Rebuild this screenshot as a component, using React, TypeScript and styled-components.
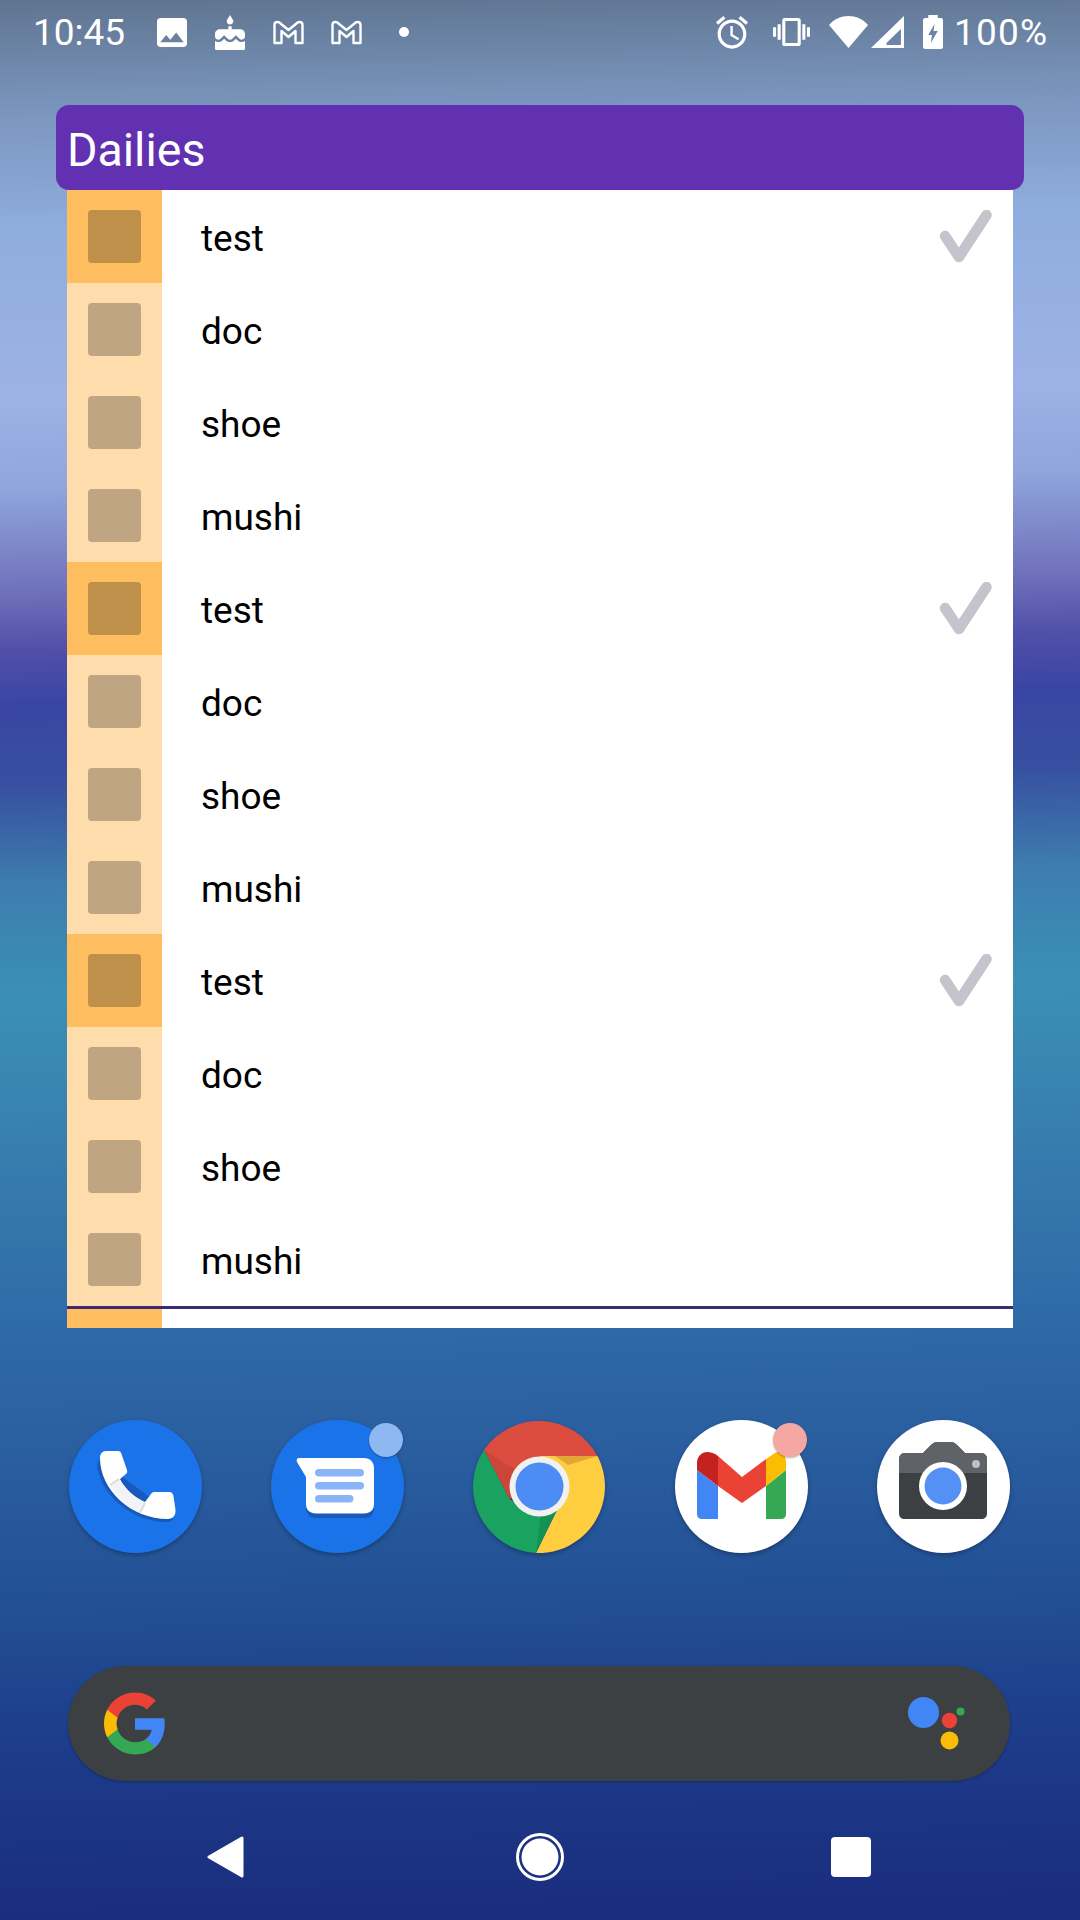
import React from "react";
import styled, { createGlobalStyle } from "styled-components";

const Global = createGlobalStyle`
  html, body { margin: 0; padding: 0; background: #1a2d7e; }
  #root { width: 1080px; height: 1920px; }
`;

const Screen = styled.div`
  width: 1080px;
  height: 1920px;
  overflow: hidden;
  display: flex;
  flex-direction: column;
  font-family: Roboto, "Liberation Sans", sans-serif;
  background: linear-gradient(
    179deg,
    #5f7490 0,
    #7a95bd 110px,
    #8fadde 230px,
    #9db2e6 400px,
    #8fa5dc 490px,
    #7072bb 590px,
    #5050a8 650px,
    #3a45a3 705px,
    #3750a0 785px,
    #3d7dae 885px,
    #3a90b6 1000px,
    #387fae 1140px,
    #2f6aa8 1330px,
    #235095 1600px,
    #1d3c8a 1750px,
    #1a2d7e 1920px
  );
`;

const StatusBar = styled.div`
  height: 64px;
  flex: none;
  display: flex;
  align-items: center;
  padding-left: 33px;
  color: #fff;
`;

const StatusText = styled.span<{ $width: number; $left?: number; $spacing?: number }>`
  font-size: 37px;
  line-height: 40px;
  padding-top: 2px;
  width: ${(p) => p.$width}px;
  margin-left: ${(p) => p.$left ?? 0}px;
  letter-spacing: ${(p) => p.$spacing ?? 0}px;
  flex: none;
`;

const NoticeSlot = styled.div`
  width: 58px;
  display: flex;
  justify-content: center;
  align-items: center;
  flex: none;
`;

const Spacer = styled.div`
  flex: 1;
`;

const StatusGlyph = styled.svg<{ $left?: number }>`
  display: block;
  flex: none;
  fill: #fff;
  margin-left: ${(p) => p.$left ?? 0}px;
`;

const Widget = styled.section`
  margin: 41px 56px 0 56px;
  flex: none;
  display: flex;
  flex-direction: column;
`;

const WidgetHeader = styled.header`
  height: 85px;
  background: #6131b2;
  border-radius: 13px;
  color: #fff;
  font-size: 46.5px;
  line-height: 91px;
  padding-left: 11px;
`;

const ListPanel = styled.div`
  margin: 0 11px;
  height: 1138px;
  background: #fff;
  display: flex;
  flex-direction: column;
  overflow: hidden;
`;

const Row = styled.div`
  height: 93px;
  flex: none;
  display: flex;
  align-items: center;
`;

const Swatch = styled.div<{ $active?: boolean }>`
  width: 95px;
  height: 100%;
  flex: none;
  display: flex;
  align-items: center;
  justify-content: center;
  background: ${(p) => (p.$active ? "#febd5f" : "#fedcab")};
`;

const SwatchBox = styled.div<{ $active?: boolean }>`
  width: 53px;
  height: 53px;
  border-radius: 4px;
  background: ${(p) => (p.$active ? "#bf9049" : "#bfa582")};
`;

const RowLabel = styled.div`
  flex: 1;
  padding: 3px 0 0 39px;
  font-size: 37px;
  color: #000;
`;

const Check = styled.svg`
  width: 53px;
  height: 53px;
  margin-right: 21px;
  flex: none;
  filter: blur(0.5px);
`;

const Divider = styled.div`
  height: 3px;
  flex: none;
  background: #3c2a72;
`;

const ListStub = styled.div`
  flex: 1;
  display: flex;
`;

const StubSwatch = styled.div`
  width: 95px;
  background: #febd5f;
`;

const Dock = styled.div`
  margin-top: 92px;
  padding: 0 70px 0 69px;
  display: flex;
  justify-content: space-between;
  flex: none;
`;

const DockApp = styled.div`
  width: 133px;
  height: 133px;
  position: relative;
  flex: none;
`;

const AppIcon = styled.svg`
  display: block;
  width: 133px;
  height: 133px;
  filter: drop-shadow(0 2px 2px rgba(0, 0, 0, 0.28));
`;

const Badge = styled.span<{ $color: string }>`
  position: absolute;
  width: 34px;
  height: 34px;
  top: 3px;
  right: 1px;
  border-radius: 50%;
  background: ${(p) => p.$color};
  box-shadow: 0 1px 2px rgba(0, 0, 0, 0.3);
`;

const SearchBar = styled.div`
  margin: 113px 70px 0 68px;
  height: 115px;
  flex: none;
  border-radius: 58px;
  background: #3c4043;
  box-shadow: 0 1px 3px rgba(0, 0, 0, 0.25);
  display: flex;
  align-items: center;
  justify-content: space-between;
  padding: 0 45px 0 36px;
`;

const SearchGlyph = styled.svg`
  display: block;
  flex: none;
`;

const NavBar = styled.nav`
  margin-top: 36px;
  height: 80px;
  flex: none;
  display: flex;
  align-items: center;
  padding-left: 207px;
`;

const NavGlyph = styled.svg<{ $left?: number }>`
  display: block;
  flex: none;
  fill: #fff;
  margin-left: ${(p) => p.$left ?? 0}px;
`;

const GmailNotice = () => (
  <StatusGlyph width="33" height="25" viewBox="0 0 32 25">
    <path
      d="M2 23V5Q2 2 5 2Q7 2 8 3.500L16 10L24 3.500Q25 2 27 2Q30 2 30 5V23H23V11L16 17L9 11V23Z"
      fill="none"
      stroke="#fff"
      strokeWidth="2.400"
      strokeLinejoin="round"
    />
  </StatusGlyph>
);

const PhoneIcon = () => (
  <AppIcon viewBox="0 0 133 133">
    <circle cx="66.500" cy="66.500" r="66.500" fill="#1a73e8" />
    <path d="M28 44C30 72 60 102 98 102C104 102 105 98 103 94L31 40Z" fill="#185abc" />
    <path
      d="M37 31H49C51 31 52 32 52.500 34L58 50C58.600 52 58 53 57 54L51 59C56 69 65 77 76 82L82 74C83 72 85 72 87 72H100C103 72 104 74 104.500 76L106.500 90C107 95 104 99 99 99C62 99 31 70 31 38C31 34 33 31 37 31Z"
      fill="#fff"
    />
    <path d="M41 65L50 59C56 69 65 77 76 83L71 93C58 87 48 77 41 65Z" fill="#f1f3f4" />
    <path d="M41 65L50 59M76 83L71 93" stroke="#dadce0" strokeWidth="2" fill="none" />
  </AppIcon>
);

const MessagesIcon = () => (
  <AppIcon viewBox="0 0 133 133">
    <circle cx="66.500" cy="66.500" r="66.500" fill="#1a73e8" />
    <path d="M35 62V88C35 94 39 98 45 98H94C100 98 103 94 103 88V70Z" fill="#185abc" />
    <path
      d="M28 38H93C99 38 103 42 103 48V84C103 90 99 93.500 93 93.500H45C39 93.500 35 90 35 84V57L26 42C25 40 26 38 28 38Z"
      fill="#fff"
    />
    <rect x="44" y="49" width="49" height="7.500" rx="3.750" fill="#8ab4f8" />
    <rect x="44" y="62" width="49" height="7.500" rx="3.750" fill="#8ab4f8" />
    <rect x="44" y="75" width="38.500" height="7.500" rx="3.750" fill="#8ab4f8" />
  </AppIcon>
);

const ChromeIcon = () => (
  <AppIcon viewBox="0 0 133 133">
    <path d="M11 30A66.500 66.500 0 0 1 124.500 36H66.500L37 80Z" fill="#dc4c3f" />
    <path d="M124.500 36A66.500 66.500 0 0 1 63 133L85 88L66.500 36Z" fill="#ffcd40" />
    <path d="M63 133A66.500 66.500 0 0 1 11 30L37 80L85 88Z" fill="#1aa260" />
    <path d="M11 30L37 80L46 52Z" fill="#b0392d" opacity="0.35" />
    <path d="M82 36H124.500L95 45Z" fill="#d6952f" opacity="0.7" />
    <path d="M85 88L63 133L68 92Z" fill="#0b6b3a" opacity="0.3" />
    <circle cx="66.500" cy="66.500" r="30" fill="#f1f1f1" />
    <circle cx="66.500" cy="66.500" r="24" fill="#4d8bf5" />
  </AppIcon>
);

const GmailIcon = () => (
  <AppIcon viewBox="0 0 133 133">
    <circle cx="66.500" cy="66.500" r="66.500" fill="#fff" />
    <path d="M22 50L43 66V99H27C24 99 22 97 22 94Z" fill="#4285f4" />
    <path d="M91 66L111 50V94C111 97 109 99 106 99H91Z" fill="#34a853" />
    <path d="M43 36L67 57L91 39V66L67 83L43 66Z" fill="#ea4335" />
    <path d="M22 50V43C22 36 27 32 32 32C36 32 39 33 43 36V66Z" fill="#c5221f" />
    <path d="M91 66V39L100 33C105 30 111 35 111 42V50Z" fill="#fbbc04" />
  </AppIcon>
);

const CameraIcon = () => (
  <AppIcon viewBox="0 0 133 133">
    <circle cx="66.500" cy="66.500" r="66.500" fill="#fff" />
    <path
      d="M28 33H46L54 25C56 23 58 22 60 22H74C76 22 78 23 80 25L88 33H104C108 33 110 36 110 39V93C110 97 108 99 104 99H28C24 99 22 97 22 93V39C22 36 24 33 28 33Z"
      fill="#3c4043"
    />
    <path
      d="M28 33H46L54 25C56 23 58 22 60 22H74C76 22 78 23 80 25L88 33H104C108 33 110 36 110 39V53H22V39C22 36 24 33 28 33Z"
      fill="#5f6368"
    />
    <circle cx="66" cy="66" r="24" fill="#fff" />
    <circle cx="66" cy="66" r="18.500" fill="#5590f5" />
    <circle cx="99" cy="44" r="4" fill="#bdc1c6" />
  </AppIcon>
);

const GoogleLogo = () => (
  <SearchGlyph width="62" height="63" viewBox="0 0 48 48">
    <path fill="#4285f4" d="M47 24.500c0-1.600-.1-3.100-.4-4.600H24v9h13c-.600 3-2.300 5.500-4.800 7.200v6h7.700C44.400 38 47 31.900 47 24.500z" />
    <path fill="#34a853" d="M24 48c6.500 0 11.900-2.100 15.900-5.800l-7.700-6c-2.100 1.400-4.900 2.300-8.200 2.300-6.300 0-11.600-4.200-13.500-10H2.500v6.200C6.400 42.500 14.600 48 24 48z" />
    <path fill="#fbbc04" d="M10.500 28.500c-.500-1.400-.8-2.900-.8-4.500s.3-3.100.8-4.500v-6.200H2.500C.9 16.500 0 20.100 0 24s.9 7.500 2.500 10.700z" />
    <path fill="#ea4335" d="M24 9.500c3.500 0 6.700 1.200 9.200 3.600l6.900-6.900C35.900 2.400 30.500 0 24 0 14.600 0 6.400 5.500 2.500 13.300l8 6.200C12.400 13.700 17.700 9.500 24 9.500z" />
  </SearchGlyph>
);

const AssistantLogo = () => (
  <SearchGlyph width="57" height="53" viewBox="0 0 57 53">
    <circle cx="15.500" cy="15.500" r="15.500" fill="#4285f4" />
    <circle cx="41.500" cy="23.500" r="7.700" fill="#ea4335" />
    <circle cx="41.500" cy="43.500" r="9" fill="#fbbc04" />
    <circle cx="52.500" cy="14.500" r="4" fill="#34a853" />
  </SearchGlyph>
);

const names = ["test", "doc", "shoe", "mushi"];
const rows = Array.from({ length: 12 }, (_, i) => ({ id: i, name: names[i % 4], done: i % 4 === 0 }));

export default function App() {
  return (
    <Screen>
      <Global />
      <StatusBar>
        <StatusText $width={110}>10:45</StatusText>
        <NoticeSlot>
          <StatusGlyph width="30" height="29" viewBox="3 3 18 18" preserveAspectRatio="none">
            <path d="M21 19V5c0-1.100-.9-2-2-2H5c-1.100 0-2 .9-2 2v14c0 1.100.9 2 2 2h14c1.100 0 2-.9 2-2zM8.500 13.500l2.500 3.010L14.500 12l4.500 6H5l3.500-4.500z" />
          </StatusGlyph>
        </NoticeSlot>
        <NoticeSlot>
          <StatusGlyph width="30" height="35" viewBox="3 0 18 22" preserveAspectRatio="none">
            <path d="M12 6c1.110 0 2-.9 2-2 0-.38-.1-.73-.29-1.030L12 0l-1.710 2.970c-.19.3-.29.65-.29 1.030 0 1.100.9 2 2 2zm4.600 9.990l-1.070-1.070-1.080 1.070c-1.300 1.300-3.580 1.310-4.890 0l-1.070-1.070-1.090 1.070C6.750 16.640 5.880 17 4.960 17c-.73 0-1.400-.23-1.960-.61V21c0 .55.45 1 1 1h16c.55 0 1-.45 1-1v-4.610c-.56.38-1.230.61-1.960.61-.92 0-1.790-.36-2.440-1.010zM18 9h-5V7h-2v2H6c-1.660 0-3 1.340-3 3v1.540c0 1.080.88 1.960 1.960 1.960.52 0 1.020-.2 1.380-.57l2.140-2.130 2.130 2.130c.74.74 2.030.74 2.770 0l2.140-2.130 2.130 2.130c.37.37.86.57 1.380.57 1.080 0 1.960-.88 1.960-1.960V12C21 10.340 19.660 9 18 9z" />
          </StatusGlyph>
        </NoticeSlot>
        <NoticeSlot>
          <GmailNotice />
        </NoticeSlot>
        <NoticeSlot>
          <GmailNotice />
        </NoticeSlot>
        <NoticeSlot>
          <StatusGlyph width="10" height="10" viewBox="0 0 10 10">
            <circle cx="5" cy="5" r="5" />
          </StatusGlyph>
        </NoticeSlot>
        <Spacer />
        <StatusGlyph width="32" height="33" viewBox="2 1.800 20 20.400" preserveAspectRatio="none">
          <path d="M22 5.720l-4.600-3.860-1.290 1.530 4.600 3.860L22 5.720zM7.880 3.390L6.600 1.860 2 5.710l1.290 1.530 4.590-3.850zM12.500 8H11v6l4.750 2.850.75-1.230-4-2.370V8zM12 4c-4.970 0-9 4.030-9 9s4.030 9 9 9 9-4.030 9-9-4.030-9-9-9zm0 16c-3.870 0-7-3.130-7-7s3.130-7 7-7 7 3.130 7 7-3.130 7-7 7z" />
        </StatusGlyph>
        <StatusGlyph $left={25} width="37" height="28" viewBox="0 3 24 18" preserveAspectRatio="none">
          <path d="M0 15h2V9H0v6zm3 2h2V7H3v10zm19-8v6h2V9h-2zm-3 8h2V7h-2v10zM16.500 3h-9C6.670 3 6 3.670 6 4.500v15c0 .83.67 1.500 1.500 1.500h9c.83 0 1.500-.67 1.500-1.500v-15c0-.83-.67-1.500-1.500-1.500zM16 19H8V5h8v14z" />
        </StatusGlyph>
        <StatusGlyph $left={19} width="39" height="32" viewBox="0 0 39 32">
          <path d="M0 9C10-3 29-3 39 9L19.500 32Z" />
        </StatusGlyph>
        <StatusGlyph $left={3} width="33" height="32" viewBox="0 0 32 32" preserveAspectRatio="none">
          <path fillRule="evenodd" d="M0 32L32 0V32ZM15 29H29V13L15 27Z" />
        </StatusGlyph>
        <StatusGlyph $left={19} width="20" height="34" viewBox="0 0 19 34" preserveAspectRatio="none">
          <path fillRule="evenodd" d="M5 0H14V3H17Q19 3 19 5V32Q19 34 17 34H2Q0 34 0 32V5Q0 3 2 3H5ZM11 9L5 20H8.500L7.500 28L14 16H10Z" />
        </StatusGlyph>
        <StatusText $left={11} $width={126} $spacing={1.200}>100%</StatusText>
      </StatusBar>

      <Widget>
        <WidgetHeader>Dailies</WidgetHeader>
        <ListPanel>
          {rows.map((r) => (
            <Row key={r.id}>
              <Swatch $active={r.done}>
                <SwatchBox $active={r.done} />
              </Swatch>
              <RowLabel>{r.name}</RowLabel>
              {r.done && (
                <Check viewBox="0 0 53 53">
                  <path
                    d="M6 26L20 47L47.500 5"
                    fill="none"
                    stroke="#c5c3cb"
                    strokeWidth="10.500"
                    strokeLinecap="round"
                    strokeLinejoin="round"
                  />
                </Check>
              )}
            </Row>
          ))}
          <Divider />
          <ListStub>
            <StubSwatch />
          </ListStub>
        </ListPanel>
      </Widget>

      <Dock>
        <DockApp>
          <PhoneIcon />
        </DockApp>
        <DockApp>
          <MessagesIcon />
          <Badge $color="#8fb8f3" />
        </DockApp>
        <DockApp>
          <ChromeIcon />
        </DockApp>
        <DockApp>
          <GmailIcon />
          <Badge $color="#f5a8a3" />
        </DockApp>
        <DockApp>
          <CameraIcon />
        </DockApp>
      </Dock>

      <SearchBar>
        <GoogleLogo />
        <AssistantLogo />
      </SearchBar>

      <NavBar>
        <NavGlyph width="37" height="42" viewBox="0 0 37 42">
          <path d="M35 2V40L2 21Z" stroke="#fff" strokeWidth="3" strokeLinejoin="round" />
        </NavGlyph>
        <NavGlyph $left={272} width="48" height="48" viewBox="0 0 48 48">
          <circle cx="24" cy="24" r="22.500" fill="none" stroke="#fff" strokeWidth="3" />
          <circle cx="24" cy="24" r="18.500" />
        </NavGlyph>
        <NavGlyph $left={267} width="40" height="40" viewBox="0 0 40 40">
          <rect width="40" height="40" rx="4" />
        </NavGlyph>
      </NavBar>
    </Screen>
  );
}
